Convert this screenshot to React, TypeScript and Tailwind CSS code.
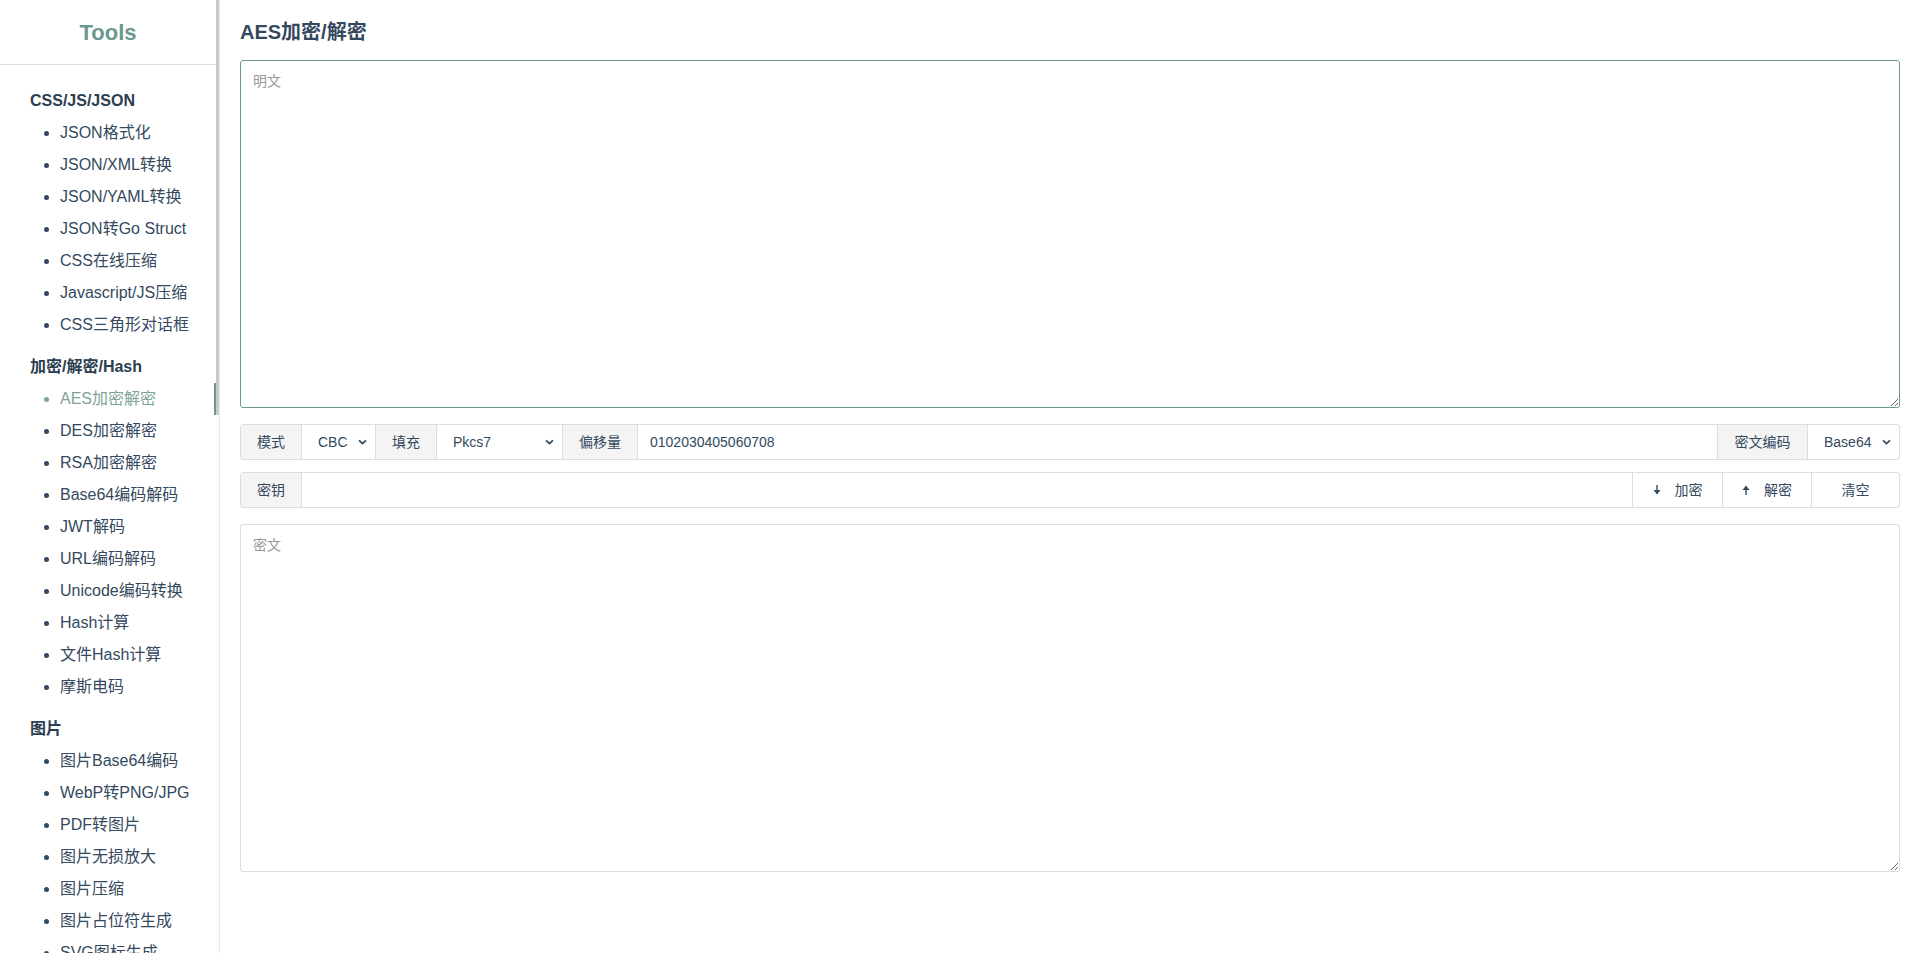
import React from "react";

const FONT = { fontFamily: '"Liberation Sans", Arial, "Noto Sans CJK SC", sans-serif' };

type Group = { title: string; items: string[] };

const GROUPS: Group[] = [
  {
    title: "CSS/JS/JSON",
    items: ["JSON格式化", "JSON/XML转换", "JSON/YAML转换", "JSON转Go Struct", "CSS在线压缩", "Javascript/JS压缩", "CSS三角形对话框"],
  },
  {
    title: "加密/解密/Hash",
    items: ["AES加密解密", "DES加密解密", "RSA加密解密", "Base64编码解码", "JWT解码", "URL编码解码", "Unicode编码转换", "Hash计算", "文件Hash计算", "摩斯电码"],
  },
  {
    title: "图片",
    items: ["图片Base64编码", "WebP转PNG/JPG", "PDF转图片", "图片无损放大", "图片压缩", "图片占位符生成", "SVG图标生成"],
  },
];

const ACTIVE = "AES加密解密";

function Chevron() {
  return (
    <svg width="9" height="6" viewBox="0 0 10 6" className="shrink-0 text-[#34495e]">
      <path d="M1.2 1.2L5 4.8l3.8-3.6" fill="none" stroke="currentColor" strokeWidth="2" />
    </svg>
  );
}

function Arrow({ up }: { up?: boolean }) {
  return (
    <svg width="8" height="10" viewBox="0 0 8 10" className={up ? "rotate-180" : ""}>
      <path d="M3.3 0h1.4v5.5H3.3z M0.5 5h7L4 9.5z" fill="currentColor" />
    </svg>
  );
}

function Label({ text, w }: { text: string; w: string }) {
  return (
    <div className={`${w} flex shrink-0 items-center justify-center border-r border-[#ddd] bg-[#f4f4f4] text-[14px] text-[#34495e]`}>
      {text}
    </div>
  );
}

function Select({ value, w, last }: { value: string; w: string; last?: boolean }) {
  return (
    <div className={`${w} flex shrink-0 items-center justify-between pl-[16px] pr-[8px] text-[14px] text-[#34495e] ${last ? "" : "border-r border-[#ddd]"}`}>
      <span>{value}</span>
      <Chevron />
    </div>
  );
}

function Sidebar() {
  return (
    <aside className="relative h-screen w-[220px] shrink-0 overflow-hidden border-r border-[#e8e8e8] bg-white">
      <div className="w-[216px]">
        <div className="flex h-[65px] items-center justify-center border-b border-[#ddd]">
          <span className="text-[22px] font-bold text-[#6b998f]">Tools</span>
        </div>
        <nav className="pt-[20px]">
          {GROUPS.map((g, gi) => (
            <div key={g.title} className={gi > 0 ? "mt-[10px]" : ""}>
              <div className="pl-[30px] text-[16px] font-bold leading-[32px] text-[#2c3e50]">{g.title}</div>
              <ul className="list-disc pl-[60px]">
                {g.items.map((it) => (
                  <li
                    key={it}
                    className={
                      it === ACTIVE
                        ? "border-r-2 border-[#6b998f] text-[16px] leading-[32px] text-[#7ea398] marker:text-[#7ea398]"
                        : "text-[16px] leading-[32px] text-[#34495e] marker:text-[#34495e]"
                    }
                  >
                    {it}
                  </li>
                ))}
              </ul>
            </div>
          ))}
        </nav>
      </div>
      <div className="absolute right-0 top-0 h-[415px] w-[3px] bg-[#cacaca]" />
    </aside>
  );
}

export default function App() {
  return (
    <div className="flex h-screen w-full overflow-hidden bg-white" style={FONT}>
      <Sidebar />
      <main className="min-w-0 flex-1 px-[20px] pt-[16px]">
        <h2 className="mb-[12px] text-[20px] font-bold leading-[32px] text-[#34495e]">AES加密/解密</h2>

        <textarea
          autoFocus
          placeholder="明文"
          className="block h-[348px] w-full rounded-[3px] border border-[#6b998f] px-[12px] py-[10px] text-[14px] leading-[20px] text-[#34495e] outline-none placeholder:text-[#999]"
          style={FONT}
        />

        <div className="mt-[16px] flex h-[36px] overflow-hidden rounded-[3px] border border-[#ddd]">
          <Label text="模式" w="w-[61px]" />
          <Select value="CBC" w="w-[74px]" />
          <Label text="填充" w="w-[61px]" />
          <Select value="Pkcs7" w="w-[126px]" />
          <Label text="偏移量" w="w-[75px]" />
          <div className="flex min-w-0 flex-1 items-center border-r border-[#ddd] pl-[12px] text-[14px] text-[#34495e]">
            0102030405060708
          </div>
          <Label text="密文编码" w="w-[90px]" />
          <Select value="Base64" w="w-[91px]" last />
        </div>

        <div className="mt-[12px] flex h-[36px] overflow-hidden rounded-[3px] border border-[#ddd]">
          <Label text="密钥" w="w-[61px]" />
          <div className="min-w-0 flex-1" />
          <button className="flex w-[90px] shrink-0 items-center justify-center gap-[14px] border-l border-[#ddd] text-[14px] text-[#34495e]">
            <Arrow />
            <span>加密</span>
          </button>
          <button className="flex w-[89px] shrink-0 items-center justify-center gap-[14px] border-l border-[#ddd] text-[14px] text-[#34495e]">
            <Arrow up />
            <span>解密</span>
          </button>
          <button className="flex w-[88px] shrink-0 items-center justify-center border-l border-[#ddd] text-[14px] text-[#34495e]">
            清空
          </button>
        </div>

        <textarea
          placeholder="密文"
          className="mt-[16px] block h-[348px] w-full rounded-[3px] border border-[#ddd] px-[12px] py-[10px] text-[14px] leading-[20px] text-[#34495e] outline-none placeholder:text-[#999]"
          style={FONT}
        />
      </main>
    </div>
  );
}
